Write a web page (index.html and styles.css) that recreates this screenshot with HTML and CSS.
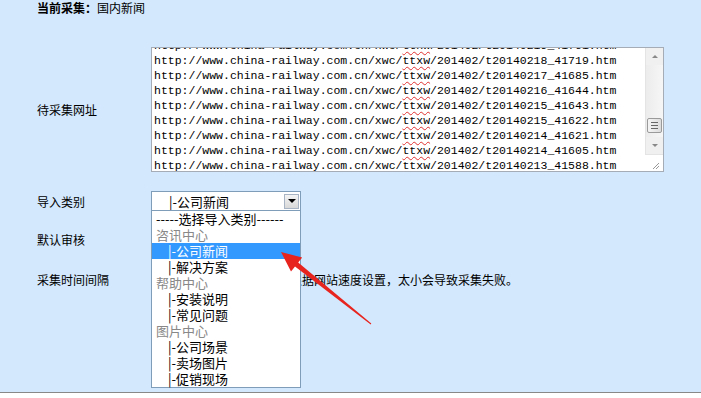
FILE: index.html
```html
<!DOCTYPE html>
<html lang="zh-CN">
<head>
  <meta charset="UTF-8" />
  <title>采集设置</title>
  <link rel="stylesheet" href="styles.css">
</head>
<body>

<div class="panel">
  <!-- Header -->
  <div class="row head">
    <span class="label"><b>当前采集：</b>国内新闻</span>
  </div>

  <!-- URL list -->
  <div class="row urls">
    <span class="label">待采集网址</span>
    <div class="ta">
      <div class="ta-text">
        <div class="ta-lines">
          <div>http://www.china-railway.com.cn/xwc/<span class="sp">ttxw</span>/201402/t20140219_41761.htm</div>
          <div>http://www.china-railway.com.cn/xwc/<span class="sp">ttxw</span>/201402/t20140218_41719.htm</div>
          <div>http://www.china-railway.com.cn/xwc/<span class="sp">ttxw</span>/201402/t20140217_41685.htm</div>
          <div>http://www.china-railway.com.cn/xwc/<span class="sp">ttxw</span>/201402/t20140216_41644.htm</div>
          <div>http://www.china-railway.com.cn/xwc/<span class="sp">ttxw</span>/201402/t20140215_41643.htm</div>
          <div>http://www.china-railway.com.cn/xwc/<span class="sp">ttxw</span>/201402/t20140215_41622.htm</div>
          <div>http://www.china-railway.com.cn/xwc/<span class="sp">ttxw</span>/201402/t20140214_41621.htm</div>
          <div>http://www.china-railway.com.cn/xwc/<span class="sp">ttxw</span>/201402/t20140214_41605.htm</div>
          <div>http://www.china-railway.com.cn/xwc/<span class="sp">ttxw</span>/201402/t20140213_41588.htm</div>
        </div>
      </div>
      <div class="ta-bar">
        <div class="sb-btn"><span class="tri up"></span></div>
        <div class="sb-track"><div class="sb-thumb"><i></i><i></i><i></i></div></div>
        <div class="sb-btn"><span class="tri down"></span></div>
        <div class="sb-corner">
          <svg width="16" height="16" viewBox="0 0 16 16"><path d="M14 8 L8 14 M14 11 L11 14" stroke="#999" stroke-width="1" fill="none"/></svg>
        </div>
      </div>
    </div>
  </div>

  <!-- Category select -->
  <div class="row">
    <span class="label">导入类别</span>
    <div class="select-wrap">
      <div class="select">
        <span class="select-val">|-公司新闻</span>
        <span class="select-btn"><span class="tri down dark"></span></span>
      </div>
      <ul class="options">
        <li>-----选择导入类别------</li>
        <li class="group">咨讯中心</li>
        <li class="sub active">|-公司新闻</li>
        <li class="sub">|-解决方案</li>
        <li class="group">帮助中心</li>
        <li class="sub">|-安装说明</li>
        <li class="sub">|-常见问题</li>
        <li class="group">图片中心</li>
        <li class="sub">|-公司场景</li>
        <li class="sub">|-卖场图片</li>
        <li class="sub">|-促销现场</li>
      </ul>
    </div>
  </div>

  <div class="row r-audit">
    <span class="label">默认审核</span>
  </div>

  <div class="row r-interval">
    <span class="label">采集时间间隔</span>
    <input class="num" type="text" value="">
    <span class="hint">秒，请根据网站速度设置，太小会导致采集失败。</span>
  </div>

  <!-- annotation arrow -->
  <svg class="arrow" width="701" height="392" viewBox="0 0 701 392">
    <polygon points="281,252 302.2,257.5 298.2,262.5 371.3,323.6 370.7,324.4 295,266.5 291,271.5" fill="#e8241f"/>
  </svg>
</div>

</body>
</html>
```

FILE: styles.css
```css
html, body {
  margin: 0; padding: 0;
  background: #fff;
  font-family: "Noto Sans CJK SC", "Liberation Sans", sans-serif;
  font-size: 12px;
  color: #000;
  overflow: hidden;
}

.panel {
  position: relative;
  height: 392px;
  background: #d3e8fc;
  border-bottom: 1px solid #888;
  overflow: hidden;
}

.row {
  display: flex;
  align-items: center;
  height: 20px;
}

.label {
  width: 114px;
  padding-left: 37px;
  flex: none;
  white-space: nowrap;
}

.head { height: 16px; line-height: 16px; }
.head .label { width: auto; }

.urls { margin-top: 31px; height: 125px; }
.row:nth-child(3) { margin-top: 19px; }
.r-audit { margin-top: 18px; }
.r-interval { margin-top: 20px; }

/* fake textarea */
.ta {
  display: flex;
  width: 511px;
  height: 123px;
  border: 1px solid #a5acb5;
  background: #fff;
}

.ta-text {
  flex: 1;
  overflow: hidden;
  padding-left: 2px;
}

.ta-lines {
  margin-top: -10px;
  font-family: "Liberation Mono", monospace;
  font-size: 11.5px;
  line-height: 15px;
  white-space: nowrap;
}

.sp {
  text-decoration: underline wavy #e03030;
  text-decoration-thickness: 1px;
  text-underline-offset: 2px;
}

.ta-bar {
  width: 17px;
  display: flex;
  flex-direction: column;
  background: #f0f0f0;
  border-left: 1px solid #e4e4e4;
}

.sb-btn {
  height: 17px;
  display: flex;
  align-items: center;
  justify-content: center;
}

.sb-track {
  height: 73px;
  background: linear-gradient(90deg, #ececec, #f6f6f6);
}

.sb-thumb {
  margin: 53px 1px 0;
  height: 13px;
  border: 1px solid #9a9a9a;
  border-radius: 2px;
  background: linear-gradient(90deg, #f4f4f4, #dcdcdc);
  display: flex;
  flex-direction: column;
  align-items: center;
  justify-content: center;
  gap: 2px;
}
.sb-thumb i { display: block; width: 7px; height: 1px; background: #666; }

.sb-corner {
  height: 16px;
  background: #fff;
  border-top: 1px solid #e4e4e4;
  margin-left: -1px;
}
.sb-corner svg { display: block; }

.tri {
  width: 0; height: 0;
  border-left: 3px solid transparent;
  border-right: 3px solid transparent;
}
.tri.up { border-bottom: 3px solid #888; }
.tri.down { border-top: 3px solid #888; }
.tri.dark { border-left-width: 4px; border-right-width: 4px; border-top: 4px solid #000; }

/* select */
.select-wrap { position: relative; }

.select {
  box-sizing: border-box;
  width: 150px;
  height: 20px;
  border: 1px solid #7f9db9;
  background: #fff;
  display: flex;
  align-items: center;
  font-size: 13px;
}

.select-val { flex: 1; padding-left: 17px; }

.select-btn {
  width: 15px;
  height: 15px;
  margin-right: 1px;
  border: 1px solid #a8b4c4;
  background: linear-gradient(#f4f4f4, #d8d8d8);
  display: flex;
  align-items: center;
  justify-content: center;
  box-sizing: border-box;
}

.options {
  position: absolute;
  top: 19px;
  left: 0;
  z-index: 2;
  box-sizing: border-box;
  width: 150px;
  margin: 0;
  padding: 0;
  list-style: none;
  background: #fff;
  border: 1px solid #7f9db9;
  font-size: 13px;
}

.options li {
  height: 16px;
  line-height: 16px;
  padding-left: 4px;
  white-space: nowrap;
}

.options li.group { color: #888; }
.options li.sub { padding-left: 16px; }
.options li.active { background: #3399ff; color: #fff; }

/* interval */
.num {
  box-sizing: border-box;
  width: 95px;
  height: 20px;
  margin: 0;
  border: 1px solid #7f9db9;
}

.hint { margin-left: 8px; white-space: nowrap; }

.arrow {
  position: absolute;
  top: 0; left: 0;
  z-index: 3;
  pointer-events: none;
}
```
